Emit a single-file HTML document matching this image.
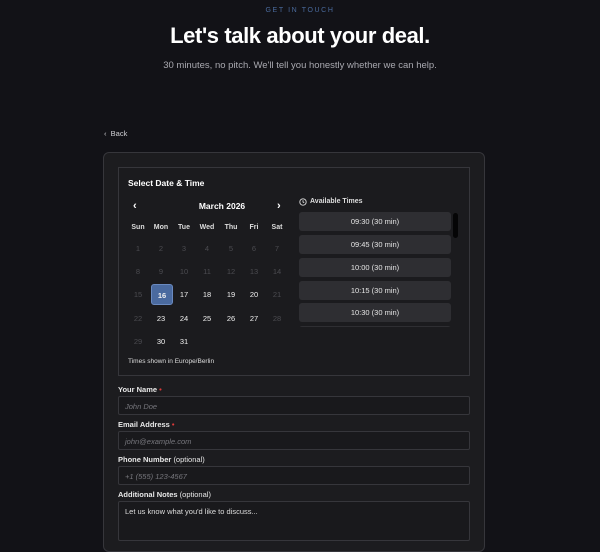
<!DOCTYPE html>
<html><head><meta charset="utf-8"><style>
*{box-sizing:border-box;margin:0;padding:0}
body{width:600px;height:532px;overflow:hidden;background:#121217;font-family:"Liberation Sans",sans-serif;color:#fff;position:relative}
.a{position:absolute}
.eyebrow{left:0;width:600px;top:7px;text-align:center;font-size:7px;letter-spacing:1.6px;color:#4a6a9c}
h1{position:absolute;left:0;width:600px;top:23px;text-align:center;font-size:22px;font-weight:bold;letter-spacing:-0.4px}
.sub{left:0;width:600px;top:60px;text-align:center;font-size:9.5px;color:#a9a9b0}
.back{left:104px;top:129px;font-size:7.5px;color:#cfcfd4}
.card{left:103px;top:152px;width:382px;height:400px;background:#1c1c1f;border:1px solid #36363b;border-radius:6px}
.inner{left:118px;top:167px;width:352px;height:209px;border:1px solid #36363b;background:#1b1b1e}
.t{font-size:8.5px;font-weight:bold}
.c{position:absolute;width:22px;text-align:center;font-size:7.5px;color:#f0f0f0}
.h{font-size:7px;font-weight:bold;color:#ddd}
.dim{color:#4b4b50}
.sel{background:#4a6a9f;border-radius:3px;height:21px;line-height:21px;border:1px solid #6a8ac0;font-weight:bold}
.btn{position:absolute;left:299px;width:152px;height:19px;background:#2e2e32;border-radius:3px;font-size:7.5px;text-align:center;line-height:19px;color:#e6e6e6}
.lbl{position:absolute;left:118px;font-size:7.5px;font-weight:bold;color:#e8e8e8}
.lbl span{color:#e03a3a}
.lbl i{font-style:normal;font-weight:normal}
.inp{position:absolute;left:118px;width:352px;height:19px;border:1px solid #36363b;border-radius:2px;background:#19191c;font-size:7.5px;font-style:italic;color:#77777d;padding:5px 0 0 6px}
</style></head><body>
<div class="a eyebrow">GET IN TOUCH</div>
<h1>Let's talk about your deal.</h1>
<div class="a sub">30 minutes, no pitch. We'll tell you honestly whether we can help.</div>
<div class="a back">‹&nbsp;&nbsp;Back</div>
<div class="a card"></div>
<div class="a inner"></div>
<div class="a t" style="left:128px;top:178px">Select Date &amp; Time</div>
<div class="a t" style="left:133px;top:200px;font-size:11px">‹</div>
<div class="a t" style="left:277px;top:200px;font-size:11px">›</div>
<div class="a t" style="left:152px;width:140px;text-align:center;top:201px">March 2026</div>
<div class="c h" style="left:127px;top:224px">Sun</div><div class="c h" style="left:150px;top:224px">Mon</div><div class="c h" style="left:173px;top:224px">Tue</div><div class="c h" style="left:196px;top:224px">Wed</div><div class="c h" style="left:220px;top:224px">Thu</div><div class="c h" style="left:243px;top:224px">Fri</div><div class="c h" style="left:266px;top:224px">Sat</div>
<div class="c dim" style="left:127px;top:244px">1</div><div class="c dim" style="left:150px;top:244px">2</div><div class="c dim" style="left:173px;top:244px">3</div><div class="c dim" style="left:196px;top:244px">4</div><div class="c dim" style="left:220px;top:244px">5</div><div class="c dim" style="left:243px;top:244px">6</div><div class="c dim" style="left:266px;top:244px">7</div>
<div class="c dim" style="left:127px;top:267px">8</div><div class="c dim" style="left:150px;top:267px">9</div><div class="c dim" style="left:173px;top:267px">10</div><div class="c dim" style="left:196px;top:267px">11</div><div class="c dim" style="left:220px;top:267px">12</div><div class="c dim" style="left:243px;top:267px">13</div><div class="c dim" style="left:266px;top:267px">14</div>
<div class="c dim" style="left:127px;top:290px">15</div><div class="c sel" style="left:151px;top:284px">16</div><div class="c" style="left:173px;top:290px">17</div><div class="c" style="left:196px;top:290px">18</div><div class="c" style="left:220px;top:290px">19</div><div class="c" style="left:243px;top:290px">20</div><div class="c dim" style="left:266px;top:290px">21</div>
<div class="c dim" style="left:127px;top:314px">22</div><div class="c" style="left:150px;top:314px">23</div><div class="c" style="left:173px;top:314px">24</div><div class="c" style="left:196px;top:314px">25</div><div class="c" style="left:220px;top:314px">26</div><div class="c" style="left:243px;top:314px">27</div><div class="c dim" style="left:266px;top:314px">28</div>
<div class="c dim" style="left:127px;top:337px">29</div><div class="c" style="left:150px;top:337px">30</div><div class="c" style="left:173px;top:337px">31</div>
<div class="a" style="left:128px;top:358px;font-size:6.5px;color:#ddd">Times shown in Europe/Berlin</div>
<svg class="a" style="left:299px;top:198px" width="8" height="8" viewBox="0 0 8 8"><circle cx="4" cy="4" r="3.2" fill="none" stroke="#ddd" stroke-width="0.9"/><path d="M4 2.2V4l1.2.8" fill="none" stroke="#ddd" stroke-width="0.9"/></svg>
<div class="a" style="left:310px;top:198px;font-size:7px;font-weight:bold;color:#ddd">Available Times</div>
<div class="a" style="left:290px;top:210px;width:170px;height:117px;overflow:hidden">
<div class="btn" style="left:9px;top:2px">09:30 (30 min)</div>
<div class="btn" style="left:9px;top:25px">09:45 (30 min)</div>
<div class="btn" style="left:9px;top:48px">10:00 (30 min)</div>
<div class="btn" style="left:9px;top:71px">10:15 (30 min)</div>
<div class="btn" style="left:9px;top:93px">10:30 (30 min)</div>
<div class="btn" style="left:9px;top:116px"></div>
<div class="a" style="left:163px;top:3px;width:5px;height:25px;background:#050506;border-radius:3px"></div>
</div>
<div class="lbl" style="top:385px">Your Name <span>•</span></div>
<div class="inp" style="top:396px">John Doe</div>
<div class="lbl" style="top:420px">Email Address <span>•</span></div>
<div class="inp" style="top:431px">john@example.com</div>
<div class="lbl" style="top:455px">Phone Number <i>(optional)</i></div>
<div class="inp" style="top:466px">+1 (555) 123-4567</div>
<div class="lbl" style="top:490px">Additional Notes <i>(optional)</i></div>
<div class="inp" style="top:501px;height:40px;font-style:normal;color:#ddd">Let us know what you'd like to discuss...</div>
</body></html>
